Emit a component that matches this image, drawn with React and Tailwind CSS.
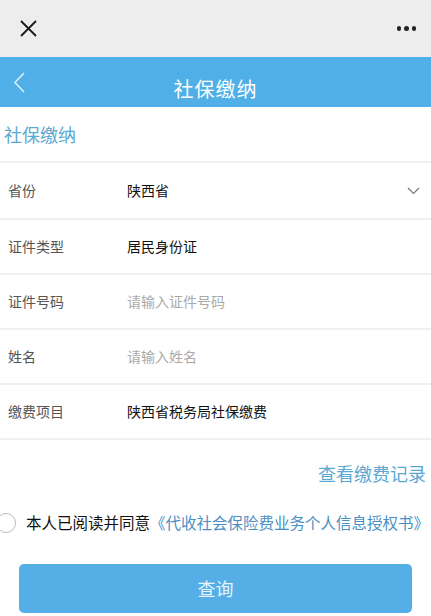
import React from 'react';

const rows = [
  { label: '省份', value: '陕西省', arrow: true },
  { label: '证件类型', value: '居民身份证' },
  { label: '证件号码', placeholder: '请输入证件号码' },
  { label: '姓名', placeholder: '请输入姓名' },
  { label: '缴费项目', value: '陕西省税务局社保缴费' },
];

export default function App() {
  return (
    <div
      className="w-[431px] h-[616px] overflow-hidden bg-white"
      style={{ fontFamily: '"Noto Sans CJK SC", "Noto Sans", sans-serif' }}
    >
      {/* 顶部微信栏 */}
      <div className="h-[57px] bg-[#ededed] flex items-center justify-between pl-[20px] pr-[15px]">
        <svg width="17" height="17" viewBox="0 0 17 17">
          <path d="M1 1L16 16M16 1L1 16" stroke="#1a1a1a" strokeWidth="1.8" />
        </svg>
        <div className="flex gap-[3px]">
          <span className="w-[4.5px] h-[4.5px] rounded-full bg-[#222]"></span>
          <span className="w-[4.5px] h-[4.5px] rounded-full bg-[#222]"></span>
          <span className="w-[4.5px] h-[4.5px] rounded-full bg-[#222]"></span>
        </div>
      </div>

      {/* 标题栏 */}
      <div className="h-[50px] bg-[#50afe6] relative flex items-center justify-center">
        <svg className="absolute left-[13px] top-[15px]" width="12" height="21" viewBox="0 0 12 21">
          <path d="M11 1L2 10.5L11 20" stroke="#d8f1ff" strokeWidth="1.6" fill="none" />
        </svg>
        <span className="text-white text-[20px] mt-[14px] tracking-[1px]">社保缴纳</span>
      </div>

      <div className="h-[56px] flex items-center pl-[4px] border-b-2 border-[#f0f0f0]">
        <span className="text-[18px] text-[#5ba8d2] mt-[1px]">社保缴纳</span>
      </div>

      {rows.map((r, i) => (
        <div
          key={r.label}
          className={`${i === 0 ? 'h-[57px]' : 'h-[55px]'} flex items-center border-b-2 border-[#f0f0f0] pr-[11px]`}
        >
          <span className="w-[127px] pl-[8px] text-[14px] text-[#555]">{r.label}</span>
          <span className={`flex-1 text-[14px] ${r.value ? 'text-[#111]' : 'text-[#aaa]'}`}>
            {r.value || r.placeholder}
          </span>
          {r.arrow && (
            <svg width="13" height="8" viewBox="0 0 13 8">
              <path d="M1 1L6.5 6.5L12 1" stroke="#777" strokeWidth="1.2" fill="none" />
            </svg>
          )}
        </div>
      ))}

      <div className="flex justify-end pr-[5px] mt-[20px]">
        <span className="text-[18px] text-[#5ba8d2]">查看缴费记录</span>
      </div>

      <div className="flex items-center mt-[24px] whitespace-nowrap">
        <span className="ml-[-4px] w-[20px] h-[20px] rounded-full border border-[#bbb] shrink-0"></span>
        <span className="ml-[10px] text-[15.5px] text-[#111]">本人已阅读并同意</span>
        <span className="text-[15.5px] text-[#4a8fc4]">《代收社会保险费业务个人信息授权书》</span>
      </div>

      <div className="px-[19px] mt-[30px]">
        <div className="h-[49px] rounded-[5px] bg-[#55aee6] flex items-center justify-center">
          <span className="text-[18px] text-[#e6f4fd]">查询</span>
        </div>
      </div>
    </div>
  );
}
